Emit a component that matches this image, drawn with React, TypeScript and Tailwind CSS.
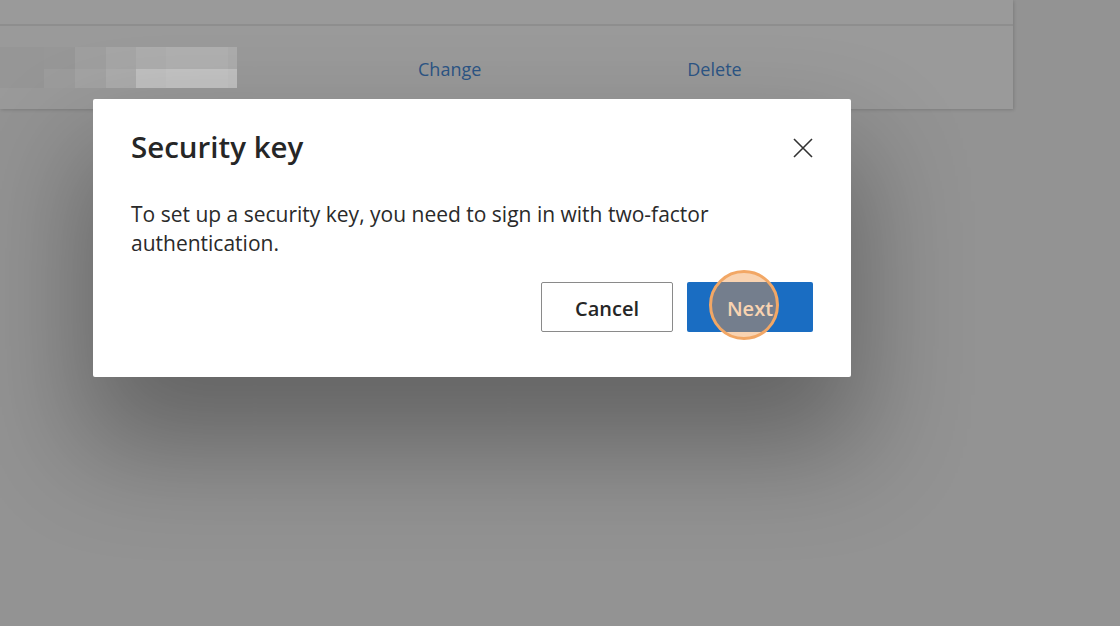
import React from 'react';

const blurTop = [
  { w: 44, c: 'bg-[#969696]' },
  { w: 31, c: 'bg-[#979797]' },
  { w: 31, c: 'bg-[#9f9f9f]' },
  { w: 30, c: 'bg-[#a6a6a6]' },
  { w: 30, c: 'bg-[#adadad]' },
  { w: 62, c: 'bg-[#b0b0b0]' },
  { w: 9, c: 'bg-[#acacac]' },
];

const blurBottom = [
  { w: 44, c: 'bg-[#969696]' },
  { w: 31, c: 'bg-[#9c9c9c]' },
  { w: 31, c: 'bg-[#a3a3a3]' },
  { w: 30, c: 'bg-[#acacac]' },
  { w: 30, c: 'bg-[#c0c0c0]' },
  { w: 62, c: 'bg-[#c3c3c3]' },
  { w: 9, c: 'bg-[#c0c0c0]' },
];

const App: React.FC = () => {
  return (
    <div
      className="relative w-[1120px] h-[626px] overflow-hidden bg-[#939393]"
      style={{ fontFamily: '"Open Sans", "Noto Sans", sans-serif' }}
    >
      {/* Dimmed page behind the dialog */}
      <div className="w-[1013px] h-[109px] bg-[#9a9a9a] shadow-[1px_1px_3px_rgba(0,0,0,0.15)] flex flex-col">
        <div className="h-[26px] border-b-2 border-[#8e8e8e]" />
        <div className="flex items-center h-[81px]">
          <div className="flex flex-col w-[237px] mt-[2px]">
            <div className="flex h-[22px]">
              {blurTop.map((b, i) => (
                <div key={i} className={b.c} style={{ width: b.w }} />
              ))}
            </div>
            <div className="flex h-[19px]">
              {blurBottom.map((b, i) => (
                <div key={i} className={b.c} style={{ width: b.w }} />
              ))}
            </div>
          </div>
          <span className="ml-[181px] text-[18px] text-[#2c5585] mt-[5px]">Change</span>
          <span className="ml-[206px] text-[18px] text-[#2c5585] mt-[5px]">Delete</span>
        </div>
      </div>

      {/* Dialog */}
      <div className="absolute left-[93px] top-[99px] w-[758px] h-[278px] bg-white rounded-[2px] shadow-[0_60px_110px_10px_rgba(0,0,0,0.32)] px-[38px] pt-[28px]">
        <div className="flex items-start justify-between">
          <h2 className="text-[29.5px] font-semibold text-[#262626] leading-[40px]">Security key</h2>
          <button className="mt-[10px] mr-[-1px] w-[22px] h-[22px] flex items-center justify-center text-[#323232]">
            <svg width="20" height="20" viewBox="0 0 20 20" fill="none" stroke="currentColor" strokeWidth="1.6">
              <path d="M1 1L19 19M19 1L1 19" />
            </svg>
          </button>
        </div>
        <p className="mt-[33px] text-[21px] leading-[29px] text-[#2a2a2a] w-[640px]">
          To set up a security key, you need to sign in with two-factor authentication.
        </p>
        <div className="flex justify-end gap-[14px] mt-[24px]">
          <button className="w-[132px] h-[50px] pt-[3px] border border-[#8a8a8a] rounded-[2px] bg-white text-[20px] font-semibold text-[#262626]">
            Cancel
          </button>
          <button className="relative w-[126px] h-[50px] pt-[3px] rounded-[2px] bg-[#1a6dc2] text-[20px] font-semibold text-white">
            Next
            <span className="absolute left-[22px] top-[-12px] w-[70px] h-[70px] rounded-full bg-[rgba(240,150,70,0.42)] border-[3px] border-[#f2a765]" />
          </button>
        </div>
      </div>
    </div>
  );
};

export default App;
